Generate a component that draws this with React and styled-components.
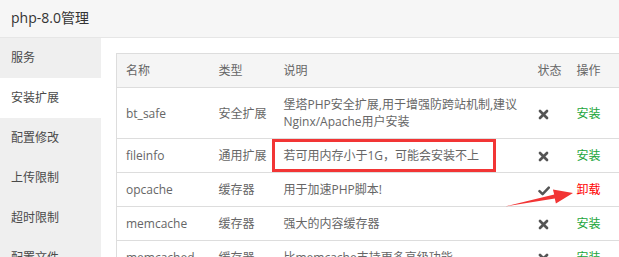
import React from "react";
import styled, { createGlobalStyle } from "styled-components";

const Global = createGlobalStyle`
  html, body { margin: 0; padding: 0; background: #fff; }
  body { width: 619px; height: 257px; overflow: hidden; font-family: "Open Sans", "Noto Sans CJK SC", sans-serif; }
`;

const Frame = styled.div`
  position: relative;
  width: 619px;
  height: 257px;
  overflow: hidden;
  display: flex;
  flex-direction: column;
`;

const Title = styled.div`
  height: 37px;
  line-height: 36px;
  flex: none;
  padding-left: 11px;
  background: #f6f6f6;
  border-bottom: 1px solid #e6e6e6;
  color: #333;
  font-size: 14px;
`;

const Body = styled.div`
  display: flex;
  flex: 1;
  min-height: 0;
`;

const Sidebar = styled.div`
  width: 101px;
  flex: none;
  background: #efefef;
  display: flex;
  flex-direction: column;
`;

const NavItem = styled.div`
  height: 40px;
  line-height: 40px;
  padding-left: 11px;
  font-size: 12px;
  color: #4a4a4a;
  background: ${(p) => (p.$active ? "#fff" : "transparent")};
  flex: none;
`;

const Main = styled.div`
  flex: 1;
  padding: 15px 0 0 15px;
  overflow: hidden;
`;

const Table = styled.table`
  width: 503px;
  border-collapse: collapse;
  table-layout: fixed;
  font-size: 12px;
  color: #666;
  border: 1px solid #ddd;
`;

const Th = styled.th`
  text-align: left;
  font-weight: normal;
  background: #f5f5f5;
  padding: 8px 9px;
  line-height: 17px;
  border-bottom: 1px solid #ddd;
  white-space: nowrap;
`;

const Td = styled.td`
  padding: 8px 9px;
  line-height: 17px;
  border-bottom: 1px solid #ddd;
  vertical-align: middle;
  white-space: ${(p) => (p.$wrap ? "normal" : "nowrap")};
`;

const Action = styled.span`
  color: ${(p) => (p.$danger ? "#ff0000" : "#20a53a")};
`;

const IconBox = styled.span`
  display: inline-flex;
  align-items: center;
  vertical-align: middle;
`;

const Overlay = styled.svg`
  position: absolute;
  left: 0;
  top: 0;
  width: 619px;
  height: 257px;
  pointer-events: none;
`;

const CrossIcon = () => (
  <IconBox>
    <svg width="11" height="11" viewBox="0 0 11 11">
      <path d="M2 2 L9 9 M9 2 L2 9" stroke="#555" strokeWidth="2.7" strokeLinecap="round" />
    </svg>
  </IconBox>
);

const CheckIcon = () => (
  <IconBox>
    <svg width="12" height="10" viewBox="0 0 12 10">
      <path d="M1.5 5.2 L4.6 8.2 L10.8 1.6" stroke="#555" strokeWidth="2.5" fill="none" strokeLinecap="round" strokeLinejoin="round" />
    </svg>
  </IconBox>
);

const nav = ["服务", "安装扩展", "配置修改", "上传限制", "超时限制", "配置文件"];

const rows = [
  { name: "bt_safe", type: "安全扩展", desc: "堡塔PHP安全扩展,用于增强防跨站机制,建议Nginx/Apache用户安装", on: false },
  { name: "fileinfo", type: "通用扩展", desc: "若可用内存小于1G，可能会安装不上", on: false },
  { name: "opcache", type: "缓存器", desc: "用于加速PHP脚本!", on: true },
  { name: "memcache", type: "缓存器", desc: "强大的内容缓存器", on: false },
  { name: "memcached", type: "缓存器", desc: "比memcache支持更多高级功能", on: false },
];

export default function App() {
  return (
    <Frame>
      <Global />
      <Title>php-8.0管理</Title>
      <Body>
        <Sidebar>
          {nav.map((n, i) => (
            <NavItem key={n} $active={i === 1}>{n}</NavItem>
          ))}
        </Sidebar>
        <Main>
          <Table>
            <colgroup>
              <col style={{ width: 93 }} />
              <col style={{ width: 65 }} />
              <col style={{ width: 254 }} />
              <col style={{ width: 39 }} />
              <col style={{ width: 52 }} />
            </colgroup>
            <thead>
              <tr>
                <Th>名称</Th>
                <Th>类型</Th>
                <Th>说明</Th>
                <Th>状态</Th>
                <Th>操作</Th>
              </tr>
            </thead>
            <tbody>
              {rows.map((r) => (
                <tr key={r.name}>
                  <Td>{r.name}</Td>
                  <Td>{r.type}</Td>
                  <Td $wrap>{r.desc}</Td>
                  <Td>{r.on ? <CheckIcon /> : <CrossIcon />}</Td>
                  <Td>{r.on ? <Action $danger>卸载</Action> : <Action>安装</Action>}</Td>
                </tr>
              ))}
            </tbody>
          </Table>
        </Main>
      </Body>
      <Overlay viewBox="0 0 619 257">
        <rect x="273.5" y="140.5" width="221" height="30" fill="none" stroke="#f23535" strokeWidth="3" />
        <polygon
          points="505,206.5 554.2,194.6 552.9,189.4 573,193 555.9,203.6 554.8,198.6"
          fill="#f23535"
        />
      </Overlay>
    </Frame>
  );
}
